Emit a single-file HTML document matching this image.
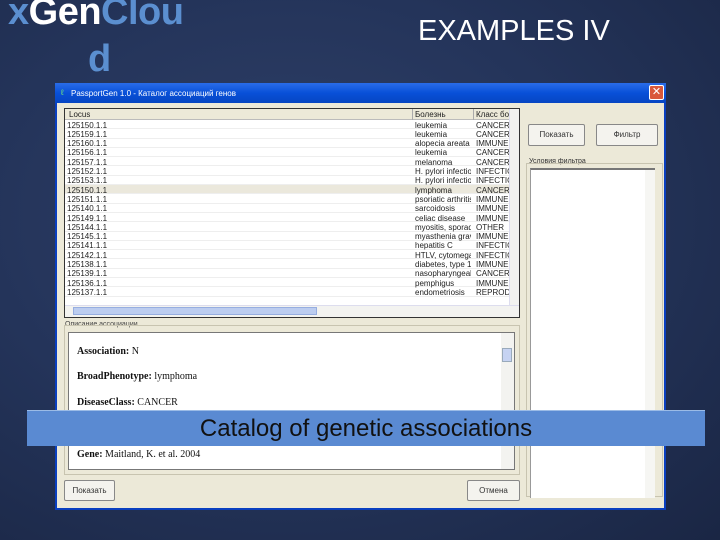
<!DOCTYPE html>
<html><head><style>
*{margin:0;padding:0;box-sizing:border-box}
body{width:720px;height:540px;overflow:hidden;background:radial-gradient(ellipse at 40% 40%,#2f4068 0%,#24345a 50%,#1a2644 100%);font-family:"Liberation Sans",sans-serif;position:relative}
.abs{position:absolute}
.t{font-size:8px;color:#222;white-space:nowrap;overflow:hidden}
.btn{position:absolute;background:#f4f3ee;border:1px solid #888;border-radius:2px;font-size:8px;color:#333;text-align:center}
</style></head><body>
<div class="abs" style="left:8px;top:-9px;font-size:38px;font-weight:bold;color:#5b8fd0;letter-spacing:-0.5px">x<span style="color:#fff">Gen</span>Clou</div>
<div class="abs" style="left:88px;top:38px;font-size:38px;font-weight:bold;color:#5b8fd0">d</div>
<div class="abs" style="left:418px;top:15px;font-size:29px;color:#fff;letter-spacing:0px">EXAMPLES IV</div>

<div class="abs" style="left:55px;top:83px;width:611px;height:427px;background:#ece9d8;border:2px solid #0a3fbf;border-top:none">
 <div class="abs" style="left:-2px;top:0;width:611px;height:20px;background:linear-gradient(#2a6ce8,#0850d8 50%,#0645c2);"></div>
 <div class="abs t" style="left:14px;top:6px;color:#fff;font-size:8px">PassportGen 1.0 - Каталог ассоциаций генов</div>
 <div class="abs" style="left:4px;top:5px;width:8px;height:9px;color:#7e7;font-size:8px">ℓ</div>
 <div class="abs" style="left:592px;top:2px;width:15px;height:15px;background:#d9583a;border:1px solid #fff;border-radius:2px;color:#fff;font-size:11px;text-align:center;line-height:13px">✕</div>
 <div class="abs" style="left:7px;top:25px;width:456px;height:210px;background:#fff;border:1px solid #333">
  <div class="abs" style="left:0;top:0;width:454px;height:11px;background:#ece9d8;border-bottom:1px solid #bbb"></div>
  <div class="abs t" style="left:4px;top:1px">Locus</div>
  <div class="abs" style="left:347px;top:0;width:1px;height:11px;background:#aaa"></div>
  <div class="abs t" style="left:350px;top:1px">Болезнь</div>
  <div class="abs" style="left:408px;top:0;width:1px;height:11px;background:#aaa"></div>
  <div class="abs t" style="left:411px;top:1px;width:33px">Класс бо</div>
  <div id="rows"></div>
  <div class="abs" style="left:444px;top:0;width:10px;height:196px;background:#f3f3f0;border-left:1px solid #dde"></div>
  <div class="abs" style="left:0;top:196px;width:454px;height:12px;background:#f3f3f0;border-top:1px solid #dde"></div>
  <div class="abs" style="left:8px;top:198px;width:244px;height:8px;background:#bccdf0;border:1px solid #97aee0"></div>
 </div>
 <div class="abs t" style="left:8px;top:238px;font-size:7px;color:#444">Описание ассоциации</div>
 <div class="abs" style="left:7px;top:242px;width:456px;height:150px;border:1px solid #c8c4b0"></div>
 <div class="abs" style="left:11px;top:249px;width:447px;height:138px;background:#fff;border:1px solid #777;font-family:'Liberation Serif',serif;font-size:10px;color:#111">
  <div class="abs" style="left:8px;top:13px"><b>Association:</b> N</div>
  <div class="abs" style="left:8px;top:38px"><b>BroadPhenotype:</b> lymphoma</div>
  <div class="abs" style="left:8px;top:64px"><b>DiseaseClass:</b> CANCER</div>
  <div class="abs" style="left:8px;top:116px"><b>Gene:</b> Maitland, K. et al. 2004</div>
  <div class="abs" style="left:432px;top:0;width:13px;height:136px;background:#f3f3f0"></div>
  <div class="abs" style="left:433px;top:15px;width:10px;height:14px;background:#c6d3f2;border:1px solid #9ab"></div>
 </div>
 <div class="btn" style="left:7px;top:397px;width:51px;height:21px;line-height:19px">Показать</div>
 <div class="btn" style="left:410px;top:397px;width:53px;height:21px;line-height:19px">Отмена</div>
 <div class="btn" style="left:471px;top:41px;width:57px;height:22px;line-height:20px">Показать</div>
 <div class="btn" style="left:539px;top:41px;width:62px;height:22px;line-height:20px">Фильтр</div>
 <div class="abs t" style="left:472px;top:75px;font-size:7px;color:#333">Условия фильтра</div>
 <div class="abs" style="left:469px;top:80px;width:137px;height:334px;border:1px solid #c8c4b0"></div>
 <div class="abs" style="left:473px;top:85px;width:125px;height:330px;background:#fff;border-top:2px solid #777;border-left:1px solid #999"></div>
 <div class="abs" style="left:588px;top:87px;width:10px;height:328px;background:#f6f6f3"></div>
</div>

<div class="abs" style="left:27px;top:410px;width:678px;height:36px;background:#5a8ad2;border-top:1px solid #9bbbe6"></div>
<div class="abs" style="left:27px;top:415px;width:678px;text-align:center;font-size:24px;color:#111">Catalog of genetic associations</div>

<script>
var d=[["125150.1.1","leukemia","CANCER"],["125159.1.1","leukemia","CANCER"],["125160.1.1","alopecia areata","IMMUNE"],["125156.1.1","leukemia","CANCER"],["125157.1.1","melanoma","CANCER"],["125152.1.1","H. pylori infection","INFECTIO"],["125153.1.1","H. pylori infection","INFECTIO"],["125150.1.1","lymphoma","CANCER"],["125151.1.1","psoriatic arthritis","IMMUNE"],["125140.1.1","sarcoidosis","IMMUNE"],["125149.1.1","celiac disease","IMMUNE"],["125144.1.1","myositis, sporad","OTHER"],["125145.1.1","myasthenia gravis","IMMUNE"],["125141.1.1","hepatitis C","INFECTIO"],["125142.1.1","HTLV, cytomega..","INFECTIO"],["125138.1.1","diabetes, type 1","IMMUNE"],["125139.1.1","nasopharyngeal..","CANCER"],["125136.1.1","pemphigus","IMMUNE"],["125137.1.1","endometriosis","REPROD"]];
var h="";for(var i=0;i<d.length;i++){var y=11+i*9.3;h+='<div class="abs" style="left:0;top:'+y+'px;width:444px;height:9.3px;border-bottom:1px solid #eee;'+(i==7?'background:#ebe8dc':'')+'"></div>';h+='<div class="abs t" style="left:2px;top:'+(y+0.5)+'px">'+d[i][0]+'</div><div class="abs t" style="left:350px;top:'+(y+0.5)+'px;width:56px">'+d[i][1]+'</div><div class="abs t" style="left:411px;top:'+(y+0.5)+'px;width:33px">'+d[i][2]+'</div>';}
document.getElementById('rows').outerHTML=h;
</script>
</body></html>
